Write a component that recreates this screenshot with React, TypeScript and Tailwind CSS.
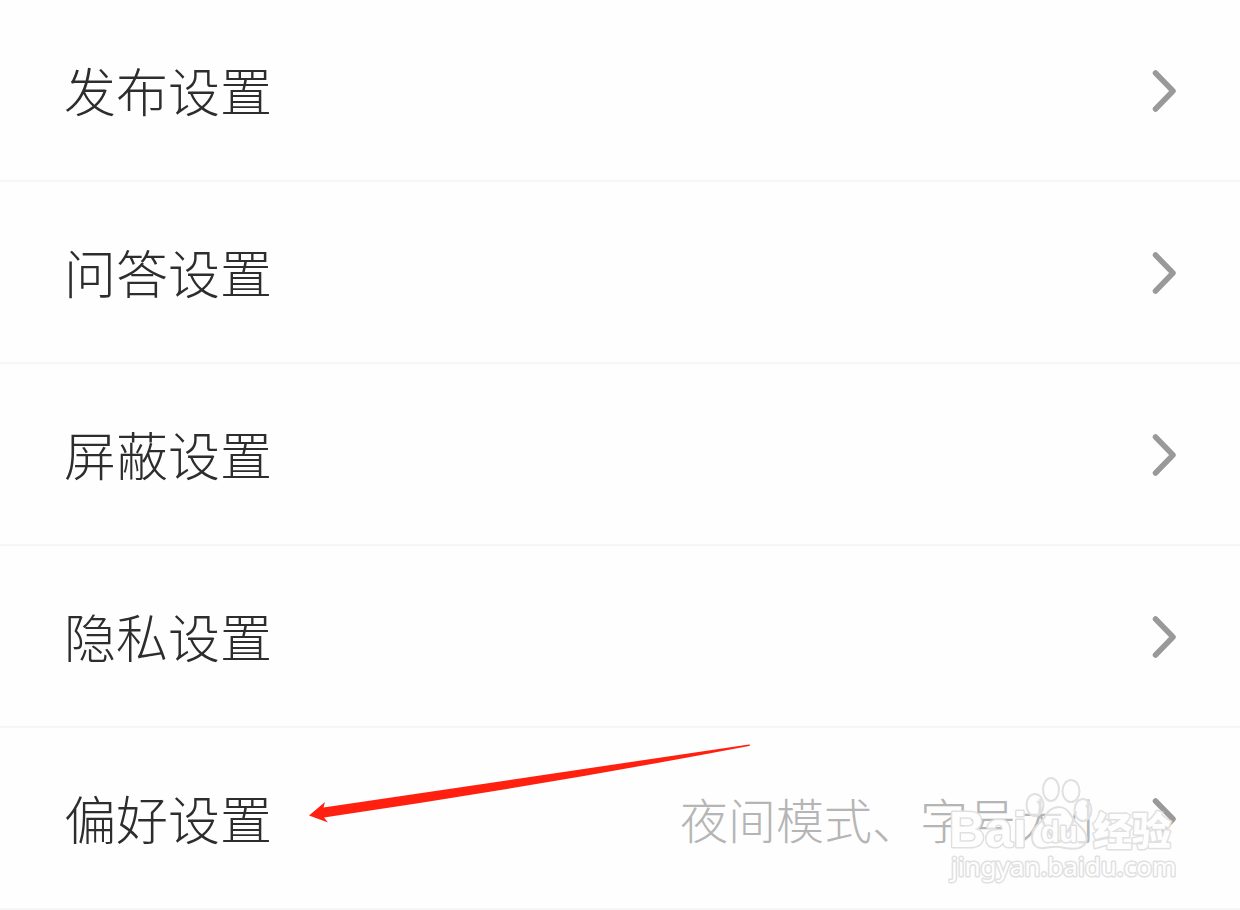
interface SettingItem {
  id: string;
  label: string;
  hint?: string;
}

const ITEMS: SettingItem[] = [
  { id: 'publish', label: '发布设置' },
  { id: 'answers', label: '问答设置' },
  { id: 'block', label: '屏蔽设置' },
  { id: 'privacy', label: '隐私设置' },
  { id: 'preferences', label: '偏好设置', hint: '夜间模式、字号大小' },
];

function Chevron() {
  return (
    <svg className="h-11 w-6 shrink-0" viewBox="0 0 24 44" fill="none" aria-hidden="true">
      <path
        d="M3.5 5 21 23 3.5 41"
        stroke="#999999"
        strokeWidth="5.5"
        strokeLinecap="round"
        strokeLinejoin="round"
      />
    </svg>
  );
}

function PointerArrow() {
  return (
    <svg
      className="pointer-events-none absolute top-4 left-[309px] h-20 w-[442px]"
      viewBox="0 0 442 80"
      aria-hidden="true"
    >
      <path
        d="M0 71.5 16 58 14.5 63.5 440 .5Q442 1 440 2Q230 42 15 73.5L19 78.5Z"
        fill="#ff2010"
      />
    </svg>
  );
}

function Watermark() {
  return (
    <svg
      className="pointer-events-none absolute top-12 right-16 h-[110px] w-[228px]"
      viewBox="0 0 228 110"
      fill="#fefefe"
      stroke="#e0e0e0"
      strokeWidth="3"
      strokeLinejoin="round"
      paintOrder="stroke"
    >
      <text
        x="1"
        y="71"
        fontSize="50"
        className="font-['Liberation_Sans',sans-serif] font-bold"
      >
        Bai
      </text>
      <g strokeWidth="2" fillOpacity="0.6" paintOrder="normal">
        <ellipse cx="103" cy="13.5" rx="8" ry="11.5" />
        <ellipse cx="123" cy="15" rx="8.5" ry="11" />
        <ellipse cx="87" cy="29" rx="8.5" ry="11" />
        <ellipse cx="135" cy="34" rx="8.5" ry="11" />
        <path d="M111 31C104 31 99 36 96 42C92 48 84 51 84 61C84 69 89 73 96 72C104 71 107 70 112 71C118 72 124 74 131 72C137 70 140 65 138 59C136 52 128 48 124 41C121 35 117 31 111 31Z" />
        <path d="M89 25Q93 28 93 36M138 29Q141 32 140 40" fill="none" />
      </g>
      <text
        x="93"
        y="66"
        fontSize="30"
        className="font-['Liberation_Sans',sans-serif] font-bold"
      >
        du
      </text>
      <text
        x="145"
        y="69"
        fontSize="39"
        className="font-['Noto_Sans_CJK_SC',sans-serif] font-black"
      >
        经验
      </text>
      <text x="3" y="100" fontSize="26" className="font-['Noto_Sans',sans-serif]">
        jingyan.baidu.com
      </text>
    </svg>
  );
}

function SettingRow({ item }: { item: SettingItem }) {
  return (
    <li className="relative border-b-2 border-[#f6f6f6]">
      <a href={`#${item.id}`} className="flex h-[180px] items-center justify-between px-16">
        <span className="text-[52px] leading-[60px] font-light whitespace-nowrap text-[#2d2d2d]">
          {item.label}
        </span>
        <span className="flex items-center gap-10">
          {item.hint && (
            <span className="text-[48px] leading-[60px] font-light whitespace-nowrap text-[#b5b5b5]">
              {item.hint}
            </span>
          )}
          <Chevron />
        </span>
      </a>
      {item.hint && (
        <>
          <PointerArrow />
          <Watermark />
        </>
      )}
    </li>
  );
}

export default function App() {
  return (
    <main className="min-h-screen bg-[#fefefe] font-['Noto_Sans_CJK_SC',sans-serif]">
      <ul>
        {ITEMS.map((item) => (
          <SettingRow key={item.id} item={item} />
        ))}
      </ul>
    </main>
  );
}
